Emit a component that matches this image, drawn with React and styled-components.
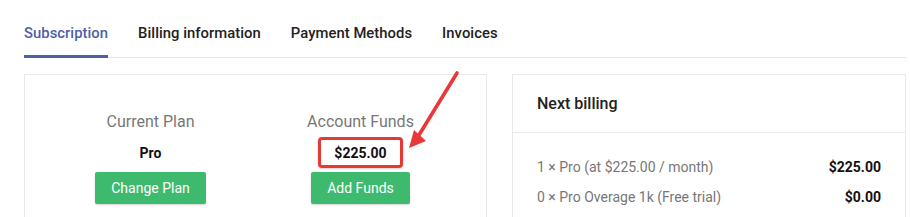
import React, { useState } from "react";
import styled, { createGlobalStyle } from "styled-components";

const GlobalStyle = createGlobalStyle`
    html, body {
        margin: 0;
        padding: 0;
        background: #ffffff;
        font-family: Roboto, "Liberation Sans", Arial, sans-serif;
        overflow: hidden;
    }
    * {
        box-sizing: border-box;
    }
`;

const Page = styled.div`
    padding: 0 4px 0 24px;
`;

const TabBar = styled.div`
    display: flex;
    gap: 30px;
    border-bottom: 1px solid #e6e6e6;
`;

const Tab = styled.div`
    padding: 24px 0 12px;
    margin-bottom: -1px;
    font-size: 14.8px;
    line-height: 19px;
    font-weight: 500;
    letter-spacing: 0.05px;
    color: ${({ active }) => (active ? "#4f5fa7" : "#222222")};
    border-bottom: 3px solid ${({ active }) => (active ? "#4f5fa7" : "transparent")};
    cursor: pointer;
`;

const Grid = styled.div`
    display: grid;
    grid-template-columns: 463px 1fr;
    gap: 25px;
    margin-top: 16px;
`;

const Card = styled.div`
    border: 1px solid #e9e9e9;
    background: #ffffff;
    min-height: 200px;
`;

const PlanCard = styled(Card)`
    display: grid;
    grid-template-columns: 210px 210px;
    justify-content: center;
    align-content: start;
    padding-top: 37px;
`;

const Column = styled.div`
    display: flex;
    flex-direction: column;
    align-items: center;
`;

const Label = styled.div`
    font-size: 16px;
    line-height: 20px;
    color: #777777;
`;

const Value = styled.div`
    position: relative;
    margin-top: 11px;
    font-size: 14px;
    line-height: 20px;
    font-weight: 700;
    color: #111111;
`;

const Highlight = styled.span`
    position: absolute;
    left: -16px;
    right: -16px;
    top: -6px;
    bottom: -5px;
    border: 3px solid #e53935;
    border-radius: 4px;
    box-shadow: 0 1px 2px rgba(0, 0, 0, 0.2);
    pointer-events: none;
`;

const Arrow = styled.svg`
    position: absolute;
    left: 65px;
    top: -77px;
    width: 64px;
    height: 90px;
    overflow: visible;
    pointer-events: none;
`;

const GreenButton = styled.button`
    margin-top: 9px;
    height: 32px;
    padding: 0 16px;
    border: none;
    border-radius: 2px;
    background: #3dba6e;
    color: #ffffff;
    font-family: inherit;
    font-size: 14px;
    box-shadow: 0 1px 2px rgba(0, 0, 0, 0.18);
    cursor: pointer;
`;

const CardHeader = styled.div`
    padding: 18px 24px;
    font-size: 16px;
    line-height: 21px;
    font-weight: 500;
    color: #222222;
    border-bottom: 1px solid #e9e9e9;
`;

const CardBody = styled.div`
    padding: 24px 24px 0;
    display: flex;
    flex-direction: column;
    gap: 10px;
`;

const Row = styled.div`
    display: flex;
    justify-content: space-between;
    font-size: 14px;
    line-height: 20px;
    color: #777777;
`;

const Amount = styled.span`
    font-weight: 700;
    color: #111111;
`;

const tabs = ["Subscription", "Billing information", "Payment Methods", "Invoices"];

const lines = [
    { label: "1 × Pro (at $225.00 / month)", amount: "$225.00" },
    { label: "0 × Pro Overage 1k (Free trial)", amount: "$0.00" }
];

const App = () => {
    const [active, setActive] = useState("Subscription");

    return (
        <Page>
            <GlobalStyle />
            <TabBar>
                {tabs.map((t) => (
                    <Tab key={t} active={t === active} onClick={() => setActive(t)}>
                        {t}
                    </Tab>
                ))}
            </TabBar>
            <Grid>
                <PlanCard>
                    <Column>
                        <Label>Current Plan</Label>
                        <Value>Pro</Value>
                        <GreenButton>Change Plan</GreenButton>
                    </Column>
                    <Column>
                        <Label>Account Funds</Label>
                        <Value>
                            $225.00
                            <Highlight />
                            <Arrow viewBox="0 0 64 90">
                                <line x1="58" y1="7" x2="20" y2="69" stroke="#e8383a" strokeWidth="3.6" strokeLinecap="round" />
                                <polygon points="10,82 15,64 27,75" fill="#e8383a" />
                            </Arrow>
                        </Value>
                        <GreenButton>Add Funds</GreenButton>
                    </Column>
                </PlanCard>
                <Card>
                    <CardHeader>Next billing</CardHeader>
                    <CardBody>
                        {lines.map((l) => (
                            <Row key={l.label}>
                                <span>{l.label}</span>
                                <Amount>{l.amount}</Amount>
                            </Row>
                        ))}
                    </CardBody>
                </Card>
            </Grid>
        </Page>
    );
};

export default App;
